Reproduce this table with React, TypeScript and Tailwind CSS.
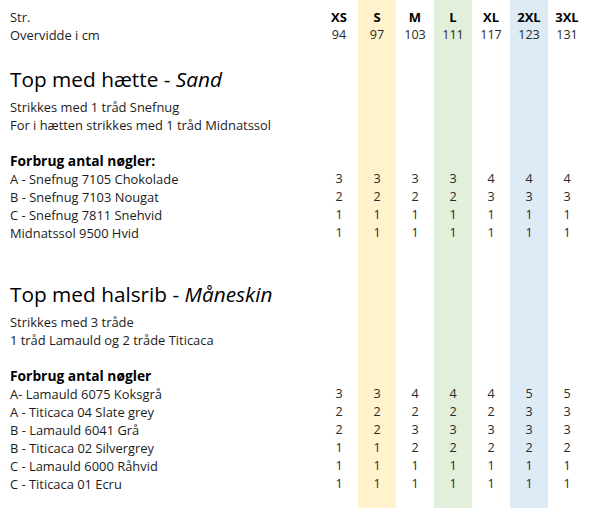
import React from "react";

const BANDS = ["", "bg-[#fff2cc]", "", "bg-[#e2efda]", "", "bg-[#ddebf7]", ""];

function Row({
  h,
  label,
  vals,
  labelClass = "",
  valClass = "",
}: {
  h: string;
  label?: React.ReactNode;
  vals?: (string | number)[];
  labelClass?: string;
  valClass?: string;
}) {
  return (
    <div className={`flex ${h}`}>
      <div className={`w-[320px] shrink-0 pl-[10px] whitespace-nowrap ${labelClass}`}>{label}</div>
      {BANDS.map((b, i) => (
        <div key={i} className={`w-[38px] shrink-0 text-center ${b} ${valClass}`}>
          {vals ? vals[i] : ""}
        </div>
      ))}
      <div className="flex-1" />
    </div>
  );
}

const body = "text-[12.9px] leading-[18px] text-[#1c1c1c]";
const bold = "text-[13.8px] leading-[18px] font-bold text-black";
const num = "text-[12.6px] leading-[18px] text-[#2a2a2a]";
const title = "text-[20.8px] leading-[28px] text-black";

export default function App() {
  return (
    <div
      className="w-[590px] h-[508px] bg-white overflow-hidden"
      style={{ fontFamily: '"Open Sans", "Noto Sans", sans-serif' }}
    >
      <Row h="h-[8px]" />
      <Row
        h="h-[18px]"
        label="Str."
        labelClass={body}
        vals={["XS", "S", "M", "L", "XL", "2XL", "3XL"]}
        valClass="text-[13px] leading-[18px] font-bold text-black"
      />
      <Row
        h="h-[18px]"
        label="Overvidde i cm"
        labelClass={body}
        vals={[94, 97, 103, 111, 117, 123, 131]}
        valClass={num}
      />
      <Row h="h-[21px]" />
      <Row
        h="h-[33px]"
        label={
          <>
            Top med hætte - <i>Sand</i>
          </>
        }
        labelClass={title}
      />
      <Row h="h-[18px]" label="Strikkes med 1 tråd Snefnug" labelClass={body} />
      <Row h="h-[18px]" label="For i hætten strikkes med 1 tråd Midnatssol" labelClass={body} />
      <Row h="h-[18px]" />
      <Row h="h-[18px]" label="Forbrug antal nøgler:" labelClass={bold} />
      <Row h="h-[18px]" label="A - Snefnug 7105 Chokolade" labelClass={body} vals={[3, 3, 3, 3, 4, 4, 4]} valClass={num} />
      <Row h="h-[18px]" label="B - Snefnug 7103 Nougat" labelClass={body} vals={[2, 2, 2, 2, 3, 3, 3]} valClass={num} />
      <Row h="h-[18px]" label="C - Snefnug 7811 Snehvid" labelClass={body} vals={[1, 1, 1, 1, 1, 1, 1]} valClass={num} />
      <Row h="h-[18px]" label="Midnatssol 9500 Hvid" labelClass={body} vals={[1, 1, 1, 1, 1, 1, 1]} valClass={num} />
      <Row h="h-[38px]" />
      <Row
        h="h-[33px]"
        label={
          <>
            Top med halsrib - <i>Måneskin</i>
          </>
        }
        labelClass={title}
      />
      <Row h="h-[18px]" label="Strikkes med 3 tråde" labelClass={body} />
      <Row h="h-[18px]" label="1 tråd Lamauld og 2 tråde Titicaca" labelClass={body} />
      <Row h="h-[18px]" />
      <Row h="h-[18px]" label="Forbrug antal nøgler" labelClass={bold} />
      <Row h="h-[18px]" label="A- Lamauld 6075 Koksgrå" labelClass={body} vals={[3, 3, 4, 4, 4, 5, 5]} valClass={num} />
      <Row h="h-[18px]" label="A - Titicaca 04 Slate grey" labelClass={body} vals={[2, 2, 2, 2, 2, 3, 3]} valClass={num} />
      <Row h="h-[18px]" label="B - Lamauld 6041 Grå" labelClass={body} vals={[2, 2, 3, 3, 3, 3, 3]} valClass={num} />
      <Row h="h-[18px]" label="B - Titicaca 02 Silvergrey" labelClass={body} vals={[1, 1, 2, 2, 2, 2, 2]} valClass={num} />
      <Row h="h-[18px]" label="C - Lamauld 6000 Råhvid" labelClass={body} vals={[1, 1, 1, 1, 1, 1, 1]} valClass={num} />
      <Row h="h-[18px]" label="C - Titicaca 01 Ecru" labelClass={body} vals={[1, 1, 1, 1, 1, 1, 1]} valClass={num} />
      <Row h="h-[15px]" />
    </div>
  );
}
